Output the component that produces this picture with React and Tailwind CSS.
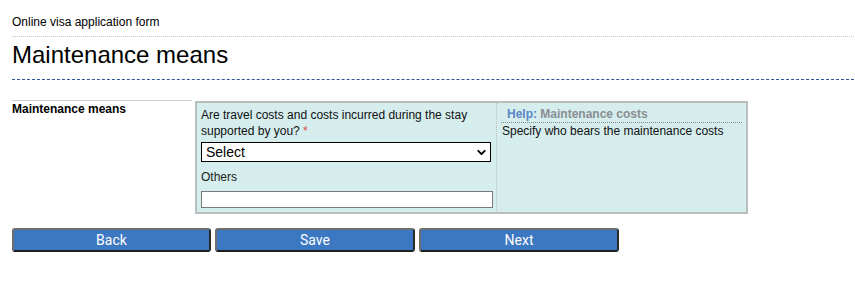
import { ChevronDown } from "lucide-react"

const buttons = [
	{ name: "Back", width: "w-[199px]" },
	{ name: "Save", width: "w-[200px]" },
	{ name: "Next", width: "w-[200px]" },
]

export default function App() {
	return (
		<div className="min-h-[298px] bg-white pl-[12px] pr-[1px] text-black" style={{ fontFamily: '"Liberation Sans", Arial, sans-serif' }}>
			{/* page header */}
			<div className="border-b border-dotted border-[#c8c8c8] pt-[15px] pb-[6px] text-[12px] leading-[15px]">Online visa application form</div>
			<h1 className="mt-[3px] border-b border-dashed border-[#2f5596] pb-[10px] text-[24px] leading-[29px]">Maintenance means</h1>

			<div className="mt-[20px] flex">
				<div className="w-[180px] border-t border-[#d0d0d0] pt-[1px] text-[12px] font-bold leading-[14px]">Maintenance means</div>

				<div className="ml-[3px] mt-[1px] flex h-[113px] w-[553px] border-2 border-[#b9bfbf] bg-[#d5eded]">
					<div className="w-[300px] border-r border-dotted border-[#b9bfbf] pl-[4px] pt-[4px]">
						<p className="text-[12px] leading-[16px] text-[#111]">
							Are travel costs and costs incurred during the stay supported by you? <span className="text-[#e0494b]">*</span>
						</p>
						<div className="mt-[3px] flex h-[20px] w-[290px] items-center justify-between border border-black bg-white pl-[4px] pr-[2px] text-[14px]">
							<span>Select</span>
							<ChevronDown className="h-[13px] w-[13px]" strokeWidth={3.5} />
						</div>
						<div className="mt-[8px] text-[12px] leading-[14px] text-[#222]">Others</div>
						<div className="mt-[7px] h-[17px] w-[292px] border border-[#7a7a7a] bg-white"></div>
					</div>

					<div className="flex-1 pl-[4px] pr-[4px] pt-[4px]">
						<div className="border-b border-dotted border-[#8a8a8a] pl-[6px] pb-[1px] text-[12px] font-bold leading-[14px]">
							<span className="text-[#5b86c6]">Help: </span>
							<span className="text-[#8a8e92]">Maintenance costs</span>
						</div>
						<div className="mt-[1px] pl-[1px] text-[12px] leading-[14px] text-[#111]">Specify who bears the maintenance costs</div>
					</div>
				</div>
			</div>

			<div className="mt-[14px] flex gap-[4px]">
				{buttons.map((b) => (
					<button
						key={b.name}
						type="button"
						className={`${b.width} h-[24px] rounded-[3px] border-2 border-t-[#6e6e6e] border-l-[#6e6e6e] border-r-[#2a2a2a] border-b-[#1e1e1e] bg-[#3c78c1] text-[14px] font-normal leading-[18px] text-white`}
						style={{ fontFamily: "Roboto, sans-serif" }}
					>
						{b.name}
					</button>
				))}
			</div>
		</div>
	)
}
